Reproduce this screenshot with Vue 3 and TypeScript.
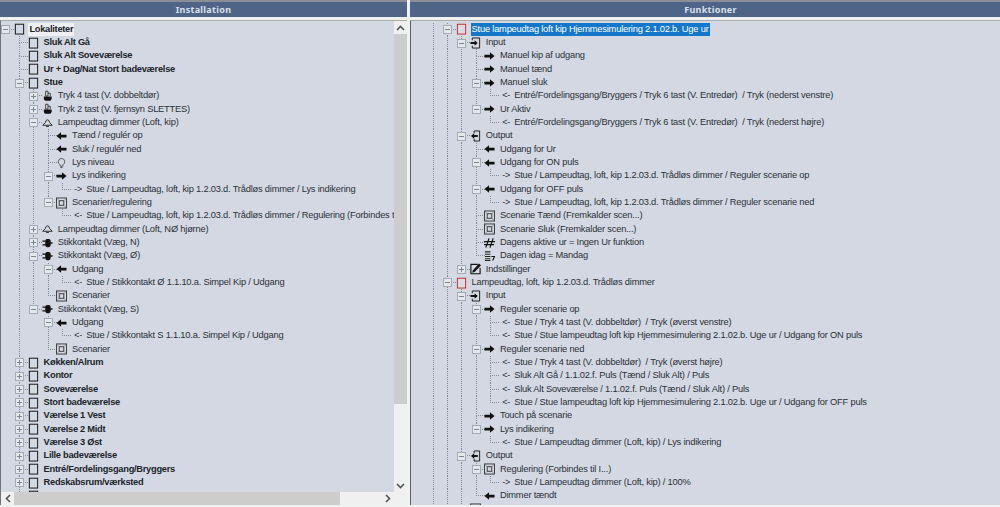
<script setup lang="ts">
type Row = { d: number; t: string; i?: string; x?: "+" | "-"; b?: boolean; sel?: boolean; hl?: boolean };

const rooms = ["Køkken/Alrum", "Kontor", "Soveværelse", "Stort badeværelse", "Værelse 1 Vest", "Værelse 2 Midt", "Værelse 3 Øst", "Lille badeværelse", "Entré/Fordelingsgang/Bryggers", "Redskabsrum/værksted"];

const leftRows: Row[] = [
  { d: 0, t: "Lokaliteter", i: "room", x: "-", b: true, hl: true },
  { d: 1, t: "Sluk Alt Gå", i: "room", b: true },
  { d: 1, t: "Sluk Alt Soveværelse", i: "room", b: true },
  { d: 1, t: "Ur + Dag/Nat Stort badeværelse", i: "room", b: true },
  { d: 1, t: "Stue", i: "room", x: "-", b: true },
  { d: 2, t: "Tryk 4 tast (V. dobbeltdør)", i: "push", x: "+" },
  { d: 2, t: "Tryk 2 tast (V. fjernsyn SLETTES)", i: "push", x: "+" },
  { d: 2, t: "Lampeudtag dimmer (Loft, kip)", i: "lamp", x: "-" },
  { d: 3, t: "Tænd / regulér op", i: "left" },
  { d: 3, t: "Sluk / regulér ned", i: "left" },
  { d: 3, t: "Lys niveau", i: "bulb" },
  { d: 3, t: "Lys indikering", i: "right", x: "-" },
  { d: 4, t: "Stue / Lampeudtag, loft, kip 1.2.03.d. Trådløs dimmer / Lys indikering", i: "->" },
  { d: 3, t: "Scenarier/regulering", i: "scene", x: "-" },
  { d: 4, t: "Stue / Lampeudtag, loft, kip 1.2.03.d. Trådløs dimmer / Regulering (Forbindes til I...)", i: "<-" },
  { d: 2, t: "Lampeudtag dimmer (Loft, NØ hjørne)", i: "lamp", x: "+" },
  { d: 2, t: "Stikkontakt (Væg, N)", i: "plug", x: "+" },
  { d: 2, t: "Stikkontakt (Væg, Ø)", i: "plug", x: "-" },
  { d: 3, t: "Udgang", i: "left", x: "-" },
  { d: 4, t: "Stue / Stikkontakt Ø 1.1.10.a. Simpel Kip / Udgang", i: "<-" },
  { d: 3, t: "Scenarier", i: "scene" },
  { d: 2, t: "Stikkontakt (Væg, S)", i: "plug", x: "-" },
  { d: 3, t: "Udgang", i: "left", x: "-" },
  { d: 4, t: "Stue / Stikkontakt S 1.1.10.a. Simpel Kip / Udgang", i: "<-" },
  { d: 3, t: "Scenarier", i: "scene" },
  ...rooms.map((t): Row => ({ d: 1, t, i: "room", x: "+", b: true })),
  { d: 1, t: "", i: "room" },
];

const rightRows: Row[] = [
  { d: 1, t: "Stue lampeudtag loft kip Hjemmesimulering 2.1.02.b. Uge ur", i: "roomr", x: "-", sel: true },
  { d: 2, t: "Input", i: "in", x: "-" },
  { d: 3, t: "Manuel kip af udgang", i: "right" },
  { d: 3, t: "Manuel tænd", i: "right" },
  { d: 3, t: "Manuel sluk", i: "right", x: "-" },
  { d: 4, t: "Entré/Fordelingsgang/Bryggers / Tryk 6 tast (V. Entredør)  / Tryk (nederst venstre)", i: "<-" },
  { d: 3, t: "Ur Aktiv", i: "right", x: "-" },
  { d: 4, t: "Entré/Fordelingsgang/Bryggers / Tryk 6 tast (V. Entredør)  / Tryk (nederst højre)", i: "<-" },
  { d: 2, t: "Output", i: "out", x: "-" },
  { d: 3, t: "Udgang for Ur", i: "left" },
  { d: 3, t: "Udgang for ON puls", i: "left", x: "-" },
  { d: 4, t: "Stue / Lampeudtag, loft, kip 1.2.03.d. Trådløs dimmer / Reguler scenarie op", i: "->" },
  { d: 3, t: "Udgang for OFF puls", i: "left", x: "-" },
  { d: 4, t: "Stue / Lampeudtag, loft, kip 1.2.03.d. Trådløs dimmer / Reguler scenarie ned", i: "->" },
  { d: 3, t: "Scenarie Tænd (Fremkalder scen...)", i: "scene" },
  { d: 3, t: "Scenarie Sluk (Fremkalder scen...)", i: "scene" },
  { d: 3, t: "Dagens aktive ur = Ingen Ur funktion", i: "hash" },
  { d: 3, t: "Dagen idag = Mandag", i: "day" },
  { d: 2, t: "Indstillinger", i: "settings", x: "+" },
  { d: 1, t: "Lampeudtag, loft, kip 1.2.03.d. Trådløs dimmer", i: "roomr", x: "-" },
  { d: 2, t: "Input", i: "in", x: "-" },
  { d: 3, t: "Reguler scenarie op", i: "right", x: "-" },
  { d: 4, t: "Stue / Tryk 4 tast (V. dobbeltdør)  / Tryk (øverst venstre)", i: "<-" },
  { d: 4, t: "Stue / Stue lampeudtag loft kip Hjemmesimulering 2.1.02.b. Uge ur / Udgang for ON puls", i: "<-" },
  { d: 3, t: "Reguler scenarie ned", i: "right", x: "-" },
  { d: 4, t: "Stue / Tryk 4 tast (V. dobbeltdør)  / Tryk (øverst højre)", i: "<-" },
  { d: 4, t: "Sluk Alt Gå / 1.1.02.f. Puls (Tænd / Sluk Alt) / Puls", i: "<-" },
  { d: 4, t: "Sluk Alt Soveværelse / 1.1.02.f. Puls (Tænd / Sluk Alt) / Puls", i: "<-" },
  { d: 4, t: "Stue / Stue lampeudtag loft kip Hjemmesimulering 2.1.02.b. Uge ur / Udgang for OFF puls", i: "<-" },
  { d: 3, t: "Touch på scenarie", i: "right" },
  { d: 3, t: "Lys indikering", i: "right", x: "-" },
  { d: 4, t: "Stue / Lampeudtag dimmer (Loft, kip) / Lys indikering", i: "<-" },
  { d: 2, t: "Output", i: "out", x: "-" },
  { d: 3, t: "Regulering (Forbindes til I...)", i: "scene", x: "-" },
  { d: 4, t: "Stue / Lampeudtag dimmer (Loft, kip) / 100%", i: "->" },
  { d: 3, t: "Dimmer tændt", i: "left" },
  { d: 2, t: "", i: "scene" },
];

// does the guide at this level carry on below row i?
function continues(rows: Row[], i: number, level: number, open: number[]) {
  for (let n = i + 1; n < rows.length; n++) {
    if (rows[n].d === level) return true;
    if (rows[n].d < level) return false;
  }
  return open.includes(level);
}

function levels(rows: Row[], i: number, open: number[]) {
  const out: boolean[] = [];
  for (let l = 0; l < rows[i].d; l++) out.push(continues(rows, i, l, open));
  return out;
}

const panels = [
  { title: "Installation", cls: "left-panel", rows: leftRows, open: [1] },
  { title: "Funktioner", cls: "right-panel", rows: rightRows, open: [0, 1] },
];
</script>

<template>
  <div class="app">
    <svg class="sprite" width="0" height="0">
      <defs>
        <symbol id="i-room" viewBox="0 0 12 12"><rect x="1.500" y=".8" width="9" height="10.700" fill="none" stroke="#1c1c1c" stroke-width="1.100" /></symbol>
        <symbol id="i-roomr" viewBox="0 0 12 12"><rect x="1.500" y=".8" width="9" height="10.700" fill="#dcdde3" stroke="#c0282c" /></symbol>
        <symbol id="i-left" viewBox="0 0 12 12"><path d="M.5 6 5.500 1.800V4.500H11.500V7.500H5.500V10.200Z" fill="#111" /></symbol>
        <symbol id="i-right" viewBox="0 0 12 12"><path d="M11.500 6 6.500 1.800V4.500H.5V7.500H6.500V10.200Z" fill="#111" /></symbol>
        <symbol id="i-in" viewBox="0 0 12 12"><path d="M2.500 3V.5H10.500V11.500H2.500V9" fill="none" stroke="#111" /><path d="M8.500 6 5 3V5H.5V7H5V9Z" fill="#111" /></symbol>
        <symbol id="i-out" viewBox="0 0 12 12"><path d="M4.500 3V.5H10.500V11.500H4.500V9" fill="none" stroke="#111" /><path d="M1 6 4.500 3V5H8.500V7H4.500V9Z" fill="#111" /></symbol>
        <symbol id="i-push" viewBox="0 0 12 12"><path d="M4 .8H6.500V6H4Z" fill="#e8e8e8" stroke="#222" stroke-width=".9" /><path d="M6.500 3H9V6" fill="none" stroke="#222" stroke-width=".9" /><path d="M2 6.500H10.500V8.500Q10.500 11.300 7.500 11.300H5Q2 11.300 2 8.500Z" fill="#111" /></symbol>
        <symbol id="i-lamp" viewBox="0 0 12 12"><path d="M.8 8.500 3.600 5.600Q4.200 2.500 6 2.500T8.400 5.600L11.200 8.500Z" fill="none" stroke="#222" /><path d="M4.500 9.800H7.500" stroke="#222" /></symbol>
        <symbol id="i-bulb" viewBox="0 0 12 12"><path d="M4.500 8Q2 6.500 2.500 4 3.200 1 6 1T9.500 4Q10 6.500 7.500 8V9.500H4.500Z" fill="none" stroke="#444" stroke-width=".9" /><path d="M4.800 11H7.200" stroke="#444" /></symbol>
        <symbol id="i-plug" viewBox="0 0 12 12"><rect x="3.500" y="1.500" width="6" height="9" rx="2.200" fill="#111" /><path d="M.5 4H4M.5 8H4M9 6H11.500" stroke="#111" stroke-width="1.400" /></symbol>
        <symbol id="i-scene" viewBox="0 0 12 12"><rect x=".5" y=".5" width="11" height="11" fill="none" stroke="#333" /><rect x="3.500" y="3.500" width="5" height="5" fill="none" stroke="#333" /><path d="M.5.500 3.500 3.500M11.500.500 8.500 3.500M.5 11.500 3.500 8.500M11.500 11.500 8.500 8.500" stroke="#666" stroke-width=".6" /></symbol>
        <symbol id="i-hash" viewBox="0 0 12 12"><path d="M5.500 1 2 11M10 1 6.500 11M0 4.500H12M0 7.800H11" stroke="#111" stroke-width="1.300" fill="none" /></symbol>
        <symbol id="i-day" viewBox="0 0 12 12"><path d="M1 1.500H7M1 4H7M1 6.500H7M1 9H7M1 11H7" stroke="#222" stroke-width="1.100" /><path d="M8 6.500H11.500L9.500 11" fill="none" stroke="#111" stroke-width="1.200" /></symbol>
        <symbol id="i-settings" viewBox="0 0 12 12"><path d="M8.500 1H1V11.200H11V4.500" fill="none" stroke="#111" stroke-width="1.200" /><path d="M9.800 0 3 7.500 2.500 10 5 9.300 12 2Z" fill="#111" /></symbol>
      </defs>
    </svg>

    <section v-for="p in panels" :key="p.title" class="panel" :class="p.cls">
      <header class="head">{{ p.title }}</header>
      <div class="body">
        <div class="view">
          <div class="tree">
            <div v-for="(r, i) in p.rows" :key="i" class="row" :class="{ bold: r.b }">
              <span
                v-for="(on, l) in levels(p.rows, i, p.open)"
                :key="l"
                class="cell"
                :class="{ guide: on }"
              ></span>
              <span class="cell joint" :class="{ top: r.d > 0, bottom: continues(p.rows, i, r.d, p.open) }">
                <span v-if="r.x" class="exp" :class="{ plus: r.x === '+' }"></span>
              </span>
              <span class="cell ico">
                <span v-if="r.i === '->' || r.i === '<-'" class="ref">{{ r.i }}</span>
                <svg v-else width="11" height="12"><use :href="`#i-${r.i}`" /></svg>
              </span>
              <span v-if="r.t" class="txt" :class="{ sel: r.sel, hl: r.hl }">{{ r.t }}</span>
            </div>
          </div>
        </div>
        <template v-if="p.cls === 'left-panel'">
          <div class="vbar">
            <span class="arrow"><svg width="9" height="6"><path d="M1 5 4.500 1.500 8 5" fill="none" stroke="#555" stroke-width="1.600" /></svg></span>
            <span class="thumb"></span>
            <span class="rest"></span>
            <span class="arrow"><svg width="9" height="6"><path d="M1 1 4.500 4.500 8 1" fill="none" stroke="#555" stroke-width="1.600" /></svg></span>
          </div>
          <div class="hbar">
            <span class="arrow"><svg width="6" height="9"><path d="M5 1 1.500 4.500 5 8" fill="none" stroke="#555" stroke-width="1.600" /></svg></span>
            <span class="thumb"></span>
            <span class="rest"></span>
            <span class="arrow"><svg width="6" height="9"><path d="M1 1 4.500 4.500 1 8" fill="none" stroke="#555" stroke-width="1.600" /></svg></span>
          </div>
        </template>
      </div>
    </section>
  </div>
</template>

<style>
html, body {
  margin: 0;
  background: #f0f1f1;
  overflow: hidden;
}
</style>

<style scoped>
.app {
  width: 1000px;
  height: 507px;
  display: grid;
  grid-template-columns: 407px 590px;
  column-gap: 3px;
  overflow: hidden;
  font-family: "Liberation Sans", Arial, sans-serif;
  font-size: 9.3px;
  letter-spacing: -0.2px;
  color: #2c3138;
  filter: blur(0.3px);
}

.sprite {
  position: absolute;
}

.panel {
  display: flex;
  flex-direction: column;
  height: 505px;
  min-width: 0;
}

.head {
  height: 15px;
  border-top: 2px solid #8b8f95;
  border-bottom: 1px solid #eef0f0;
  margin-bottom: 2px;
  background: #4e6588;
  color: #dbe0e8;
  font-family: "Noto Sans", sans-serif;
  font-weight: 700;
  font-size: 9px;
  letter-spacing: 0.3px;
  line-height: 15px;
  text-align: center;
}

.right-panel .head {
  padding-left: 11px;
}

.body {
  flex: 1;
  min-height: 0;
  display: grid;
  border-top: 1px solid #a9adaa;
}

.left-panel .body {
  grid-template-columns: 1fr 13px;
  grid-template-rows: 1fr 13px;
  border-left: 1px solid #70757c;
  background: #f0f0f0;
}

.right-panel .body {
  grid-template-columns: 1fr;
  border-left: 1px solid #5c6068;
}

.view {
  background: #d3d8e2;
  overflow: hidden;
  min-width: 0;
  min-height: 0;
}

.tree {
  padding-top: 1.7px;
  width: 900px;
}

.left-panel .tree {
  margin-left: -1px;
}

.right-panel .tree {
  margin-left: 17px;
}

.row {
  display: flex;
  align-items: center;
  height: 13.33px;
  line-height: 13.33px;
  white-space: pre;
}

.bold {
  font-weight: 700;
  letter-spacing: -0.28px;
  color: #20242a;
}

.cell {
  position: relative;
  flex: none;
  width: 14.2px;
  height: 100%;
}

/* dotted tree lines */
.guide::before,
.joint.top::before,
.joint.bottom::after {
  content: "";
  position: absolute;
  left: 5px;
  width: 1px;
  background: repeating-linear-gradient(to bottom, #848b96 0 1px, transparent 1px 2px);
}

.guide::before {
  top: 0;
  bottom: 0;
}

.joint.top::before {
  top: 0;
  height: 50%;
}

.joint.bottom::after {
  top: 50%;
  bottom: 0;
}

.joint {
  background: repeating-linear-gradient(to right, #848b96 0 1px, transparent 1px 2px) 5px 50% / 9px 1px no-repeat;
}

.exp {
  position: absolute;
  z-index: 1;
  left: 1px;
  top: 2.500px;
  width: 7px;
  height: 7px;
  border: 1px solid #a5abb5;
  background: #e4e7ec;
}

.exp::before {
  content: "";
  position: absolute;
  left: 1px;
  right: 1px;
  top: 3px;
  height: 1px;
  background: #7f858f;
}

.exp.plus::after {
  content: "";
  position: absolute;
  top: 1px;
  bottom: 1px;
  left: 3px;
  width: 1px;
  background: #7f858f;
}

.ico {
  display: flex;
  align-items: center;
}

.ico svg {
  display: block;
  margin-left: -0.5px;
}

.ref {
  padding-left: 3.300px;
  font-size: 9px;
}

.txt {
  padding: 0 1px;
}

.hl {
  background: #eef0f3;
}

.sel {
  background: #1477c9;
  color: #fff;
}

.vbar {
  display: flex;
  flex-direction: column;
  background: #f0f0f0;
}

.hbar {
  display: flex;
  background: #f0f0f0;
}

.vbar .thumb {
  height: 370px;
  background: #cdcdcb;
}

.hbar .thumb {
  width: 326px;
  background: #cdcdcb;
}

.rest {
  flex: 1;
}

.arrow {
  flex: none;
  width: 13px;
  height: 13px;
  display: flex;
  align-items: center;
  justify-content: center;
}
</style>
